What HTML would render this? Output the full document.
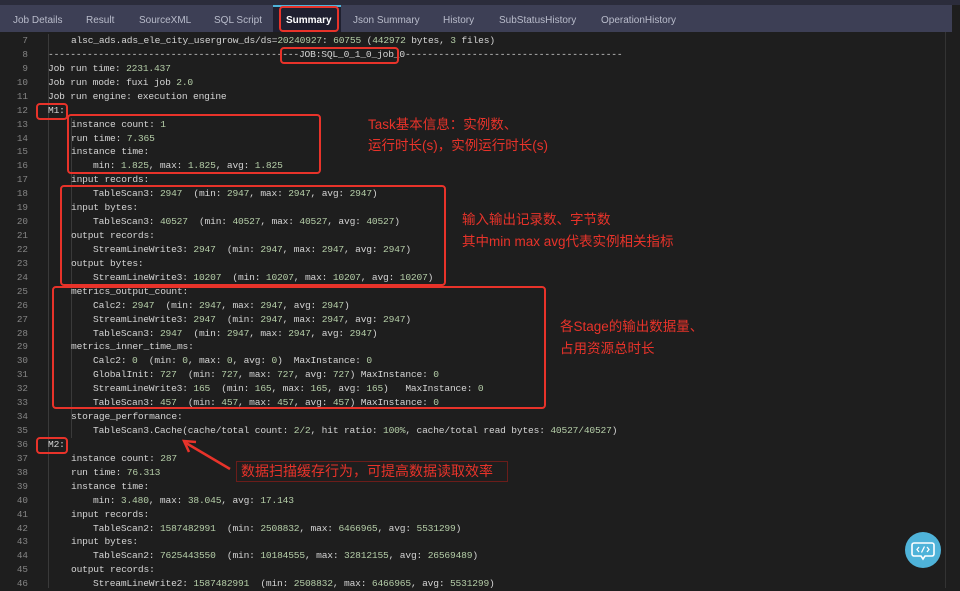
<!DOCTYPE html>
<html><head><meta charset="utf-8"><style>
*{margin:0;padding:0;box-sizing:border-box}
body{width:960px;height:588px;overflow:hidden;background:#1e1e1e;position:relative;font-family:"Liberation Mono",monospace}
.top{position:absolute;left:0;top:0;width:960px;height:5px;background:#2b2c3b}
.tabs{position:absolute;left:0;top:5px;width:952px;height:27px;background:#3d3f55}
.tab{position:absolute;top:10px;font:10px "Liberation Sans",sans-serif;color:#b9bccb}
.act{position:absolute;left:273px;top:5px;width:68px;height:27px;background:#1f2030;border-top:2px solid #4fb3d9}
.ln{position:absolute;left:0;width:28px;text-align:right;font-size:9.3px;color:#858585;line-height:14px}
.cd{position:absolute;font-size:9.6px;letter-spacing:-0.18px;color:#d4d4d4;line-height:14px;white-space:pre}
.n{color:#b5cea8}
.box{position:absolute;border:2px solid #e8332a;border-radius:4px}
.ann{position:absolute;color:#e8332a;font:13.5px "Liberation Sans","Noto Sans CJK SC",sans-serif;line-height:22px;white-space:nowrap}
.guide{position:absolute;width:1px;background:#3a3a3a}
</style></head><body>
<div class="top"></div>
<div class="tabs"></div>
<div class="act"></div>
<div class="tab" style="left:13px;top:15px">Job Details</div>
<div class="tab" style="left:86px;top:15px">Result</div>
<div class="tab" style="left:139px;top:15px">SourceXML</div>
<div class="tab" style="left:214px;top:15px">SQL Script</div>
<div class="tab" style="left:286px;top:15px;color:#fff;font-weight:bold">Summary</div>
<div class="tab" style="left:353px;top:15px">Json Summary</div>
<div class="tab" style="left:443px;top:15px">History</div>
<div class="tab" style="left:499px;top:15px">SubStatusHistory</div>
<div class="tab" style="left:601px;top:15px">OperationHistory</div>
<div class="box" style="left:279px;top:6px;width:60px;height:26px"></div>
<div style="position:absolute;left:945px;top:32px;width:1px;height:556px;background:#333"></div>
<div class="guide" style="left:48px;top:34px;height:554px"></div>
<div class="guide" style="left:71px;top:118px;height:320px"></div>

<div id="c"></div>
<script>
var L=[
[7,71,'alsc_ads.ads_ele_city_usergrow_ds/ds=<n>20240927</n>: <n>60755</n> (<n>442972</n> bytes, <n>3</n> files)'],
[8,48,'---------------------------------------------JOB:SQL_0_1_0_job_0---------------------------------------'],
[9,48,'Job run time: <n>2231.437</n>'],
[10,48,'Job run mode: fuxi job <n>2.0</n>'],
[11,48,'Job run engine: execution engine'],
[12,48,'M1:'],
[13,71,'instance count: <n>1</n>'],
[14,71,'run time: <n>7.365</n>'],
[15,71,'instance time:'],
[16,93,'min: <n>1.825</n>, max: <n>1.825</n>, avg: <n>1.825</n>'],
[17,71,'input records:'],
[18,93,'TableScan3: <n>2947</n>  (min: <n>2947</n>, max: <n>2947</n>, avg: <n>2947</n>)'],
[19,71,'input bytes:'],
[20,93,'TableScan3: <n>40527</n>  (min: <n>40527</n>, max: <n>40527</n>, avg: <n>40527</n>)'],
[21,71,'output records:'],
[22,93,'StreamLineWrite3: <n>2947</n>  (min: <n>2947</n>, max: <n>2947</n>, avg: <n>2947</n>)'],
[23,71,'output bytes:'],
[24,93,'StreamLineWrite3: <n>10207</n>  (min: <n>10207</n>, max: <n>10207</n>, avg: <n>10207</n>)'],
[25,71,'metrics_output_count:'],
[26,93,'Calc2: <n>2947</n>  (min: <n>2947</n>, max: <n>2947</n>, avg: <n>2947</n>)'],
[27,93,'StreamLineWrite3: <n>2947</n>  (min: <n>2947</n>, max: <n>2947</n>, avg: <n>2947</n>)'],
[28,93,'TableScan3: <n>2947</n>  (min: <n>2947</n>, max: <n>2947</n>, avg: <n>2947</n>)'],
[29,71,'metrics_inner_time_ms:'],
[30,93,'Calc2: <n>0</n>  (min: <n>0</n>, max: <n>0</n>, avg: <n>0</n>)  MaxInstance: <n>0</n>'],
[31,93,'GlobalInit: <n>727</n>  (min: <n>727</n>, max: <n>727</n>, avg: <n>727</n>) MaxInstance: <n>0</n>'],
[32,93,'StreamLineWrite3: <n>165</n>  (min: <n>165</n>, max: <n>165</n>, avg: <n>165</n>)   MaxInstance: <n>0</n>'],
[33,93,'TableScan3: <n>457</n>  (min: <n>457</n>, max: <n>457</n>, avg: <n>457</n>) MaxInstance: <n>0</n>'],
[34,71,'storage_performance:'],
[35,93,'TableScan3.Cache(cache/total count: <n>2/2</n>, hit ratio: <n>100%</n>, cache/total read bytes: <n>40527/40527</n>)'],
[36,48,'M2:'],
[37,71,'instance count: <n>287</n>'],
[38,71,'run time: <n>76.313</n>'],
[39,71,'instance time:'],
[40,93,'min: <n>3.480</n>, max: <n>38.045</n>, avg: <n>17.143</n>'],
[41,71,'input records:'],
[42,93,'TableScan2: <n>1587482991</n>  (min: <n>2508832</n>, max: <n>6466965</n>, avg: <n>5531299</n>)'],
[43,71,'input bytes:'],
[44,93,'TableScan2: <n>7625443550</n>  (min: <n>10184555</n>, max: <n>32812155</n>, avg: <n>26569489</n>)'],
[45,71,'output records:'],
[46,93,'StreamLineWrite2: <n>1587482991</n>  (min: <n>2508832</n>, max: <n>6466965</n>, avg: <n>5531299</n>)']
];
var h='';
L.forEach(function(l){var t=34+(l[0]-7)*13.93;
h+='<div class="ln" style="top:'+t+'px">'+l[0]+'</div><div class="cd" style="left:'+l[1]+'px;top:'+t+'px">'+l[2].replace(/<n>/g,'<span class="n">').replace(/<\/n>/g,'</span>')+'</div>';});
document.getElementById('c').innerHTML=h;
</script>
<div class="box" style="left:280px;top:47px;width:119px;height:17px"></div>
<div class="box" style="left:36px;top:103px;width:32px;height:17px"></div>
<div class="box" style="left:67px;top:114px;width:254px;height:60px"></div>
<div class="box" style="left:60px;top:185px;width:386px;height:101px"></div>
<div class="box" style="left:52px;top:286px;width:494px;height:123px"></div>
<div class="box" style="left:36px;top:437px;width:32px;height:17px"></div>
<div class="ann" style="left:368px;top:114px">Task基本信息：实例数、</div>
<div class="ann" style="left:368px;top:135px">运行时长(s)，实例运行时长(s)</div>
<div class="ann" style="left:462px;top:209px">输入输出记录数、字节数</div>
<div class="ann" style="left:462px;top:231px">其中min max avg代表实例相关指标</div>
<div class="ann" style="left:560px;top:316px">各Stage的输出数据量、</div>
<div class="ann" style="left:560px;top:338px">占用资源总时长</div>
<div style="position:absolute;left:236px;top:461px;width:272px;height:21px;border:1px solid #6b1d1a"></div>
<div class="ann" style="left:241px;top:460px;font-size:14px">数据扫描缓存行为，可提高数据读取效率</div>
<svg style="position:absolute;left:0;top:0" width="960" height="588">
<line x1="230" y1="469" x2="186" y2="443" stroke="#e8332a" stroke-width="2.5"/>
<polyline points="196,442 184,441 189,452" fill="none" stroke="#e8332a" stroke-width="2.5"/>
<circle cx="923" cy="550" r="18" fill="#4fb3d9"/>
<path d="M914 543 h18 a2 2 0 0 1 2 2 v9 a2 2 0 0 1 -2 2 h-7 l-2 3 l-2 -3 h-7 a2 2 0 0 1 -2 -2 v-9 a2 2 0 0 1 2 -2z" fill="none" stroke="#fff" stroke-width="1.6"/>
<path d="M919 547 l-2 2.5 l2 2.5 M927 547 l2 2.5 l-2 2.5 M924.5 546.5 l-3 6" fill="none" stroke="#fff" stroke-width="1.3"/>
</svg>
</body></html>
